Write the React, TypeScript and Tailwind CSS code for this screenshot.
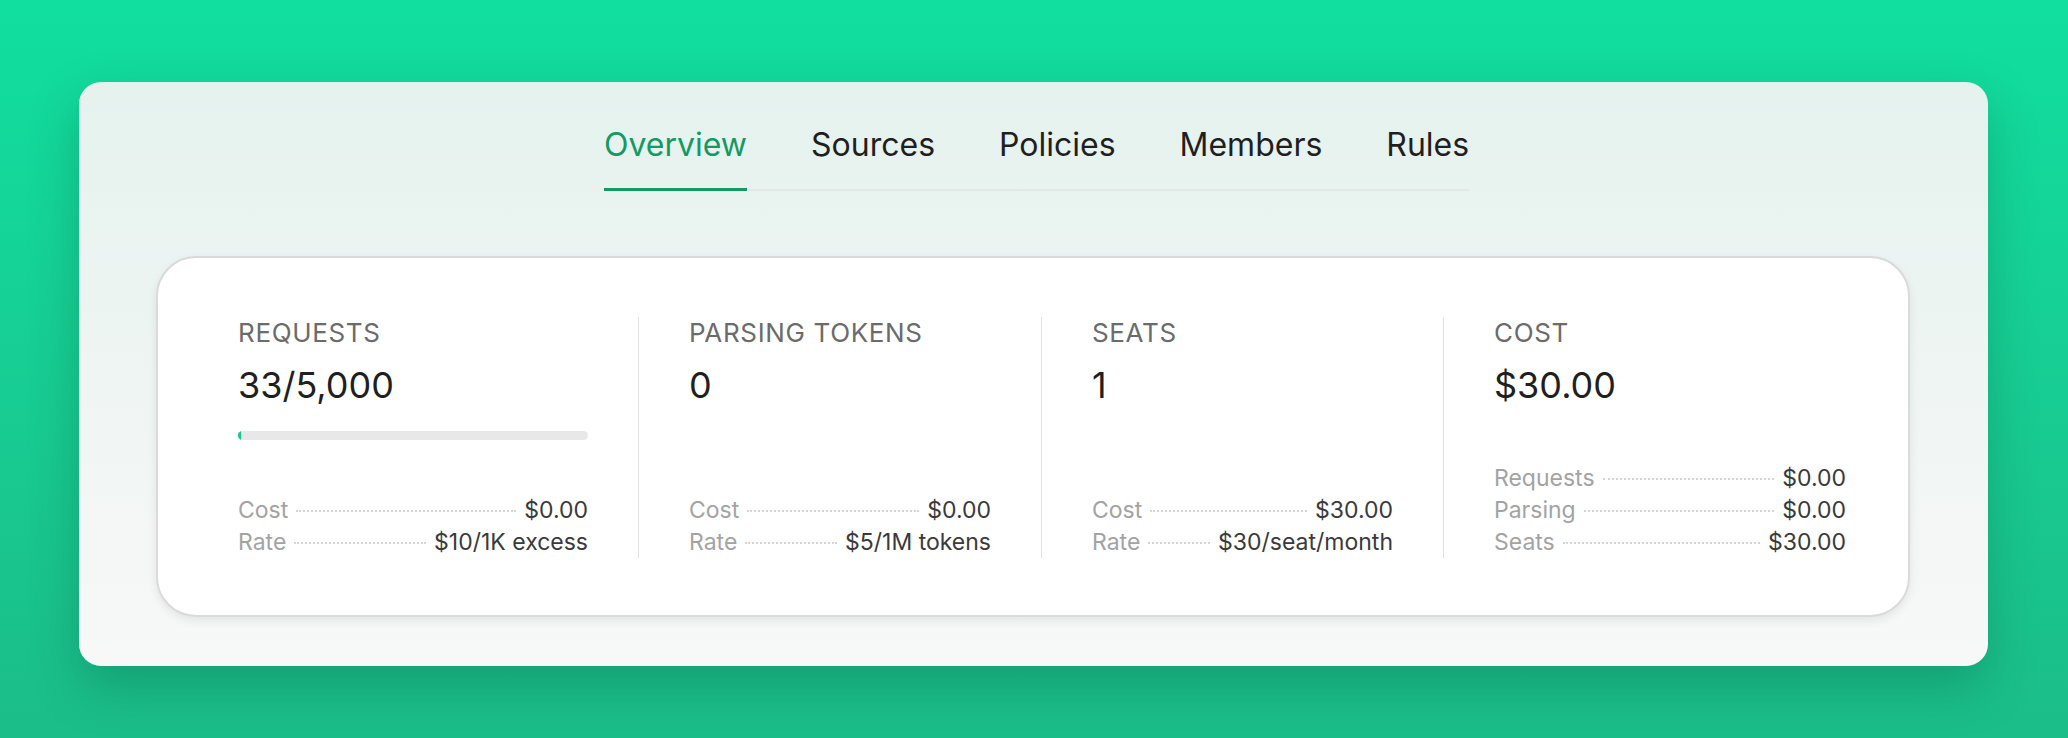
const tabs = ['Overview', 'Sources', 'Policies', 'Members', 'Rules'];

function Row({ k, v }: { k: string; v: string }) {
  return (
    <div className="flex items-baseline gap-2 text-[23px] leading-[32px]">
      <span className="text-[#a3a3a3]">{k}</span>
      <span className="flex-1 border-b-2 border-dotted border-[#d4d4d4] translate-y-[-6px]" />
      <span className="text-[#3a3a3a]">{v}</span>
    </div>
  );
}

function Stat({ label, value, w, children, rows }: { label: string; value: string; w: string; children?: React.ReactNode; rows: [string, string][] }) {
  return (
    <div className={`${w} flex flex-col`}>
      <div className="text-[26px] leading-[32px] text-[#6b6b6b] tracking-wide">{label}</div>
      <div className="mt-[16px] text-[36px] leading-[40px] text-[#1f1f1f]">{value}</div>
      <div className="flex-1">{children}</div>
      <div className="flex flex-col">
        {rows.map(([k, v]) => <Row key={k} k={k} v={v} />)}
      </div>
    </div>
  );
}

function Divider() {
  return <div className="w-px bg-[#e2e2e2] mx-[50px]" />;
}

export default function App() {
  return (
    <div className="w-[2068px] h-[738px] bg-gradient-to-b from-[#10df9f] to-[#1bbd88] pt-[82px] pl-[79px]" style={{ fontFamily: 'Inter, "Noto Sans", sans-serif' }}>
      <div className="w-[1909px] h-[584px] rounded-[22px] bg-gradient-to-b from-[#e5f2ee] to-[#f8f8f8] shadow-[0_20px_50px_rgba(0,60,40,0.25)] flex flex-col">
        <div className="mt-[43px] ml-[525px] self-start flex gap-[64px] border-b-2 border-[#e3e8e6]">
          {tabs.map((t, i) => (
            <div key={t} className={`pb-[23px] text-[32px] leading-[40px] ${i === 0 ? 'text-[#139a63] border-b-[3px] border-[#139a63] -mb-[2px]' : 'text-[#1f1f1f]'}`}>
              {t}
            </div>
          ))}
        </div>
        <div className="mt-[65px] ml-[77px] w-[1754px] h-[361px] rounded-[40px] bg-white border-2 border-[#dadada] shadow-[0_4px_10px_rgba(0,0,0,0.08)] flex pl-[80px] pt-[59px] pb-[57px]">
          <Stat label="REQUESTS" value="33/5,000" w="w-[350px]" rows={[['Cost', '$0.00'], ['Rate', '$10/1K excess']]}>
            <div className="mt-[26px] h-[9px] rounded-full bg-[#e8e8e8] overflow-hidden">
              <div className="h-full w-[3px] bg-[#10c98c]" />
            </div>
          </Stat>
          <Divider />
          <Stat label="PARSING TOKENS" value="0" w="w-[302px]" rows={[['Cost', '$0.00'], ['Rate', '$5/1M tokens']]} />
          <Divider />
          <Stat label="SEATS" value="1" w="w-[301px]" rows={[['Cost', '$30.00'], ['Rate', '$30/seat/month']]} />
          <Divider />
          <Stat label="COST" value="$30.00" w="w-[352px]" rows={[['Requests', '$0.00'], ['Parsing', '$0.00'], ['Seats', '$30.00']]} />
        </div>
      </div>
    </div>
  );
}
